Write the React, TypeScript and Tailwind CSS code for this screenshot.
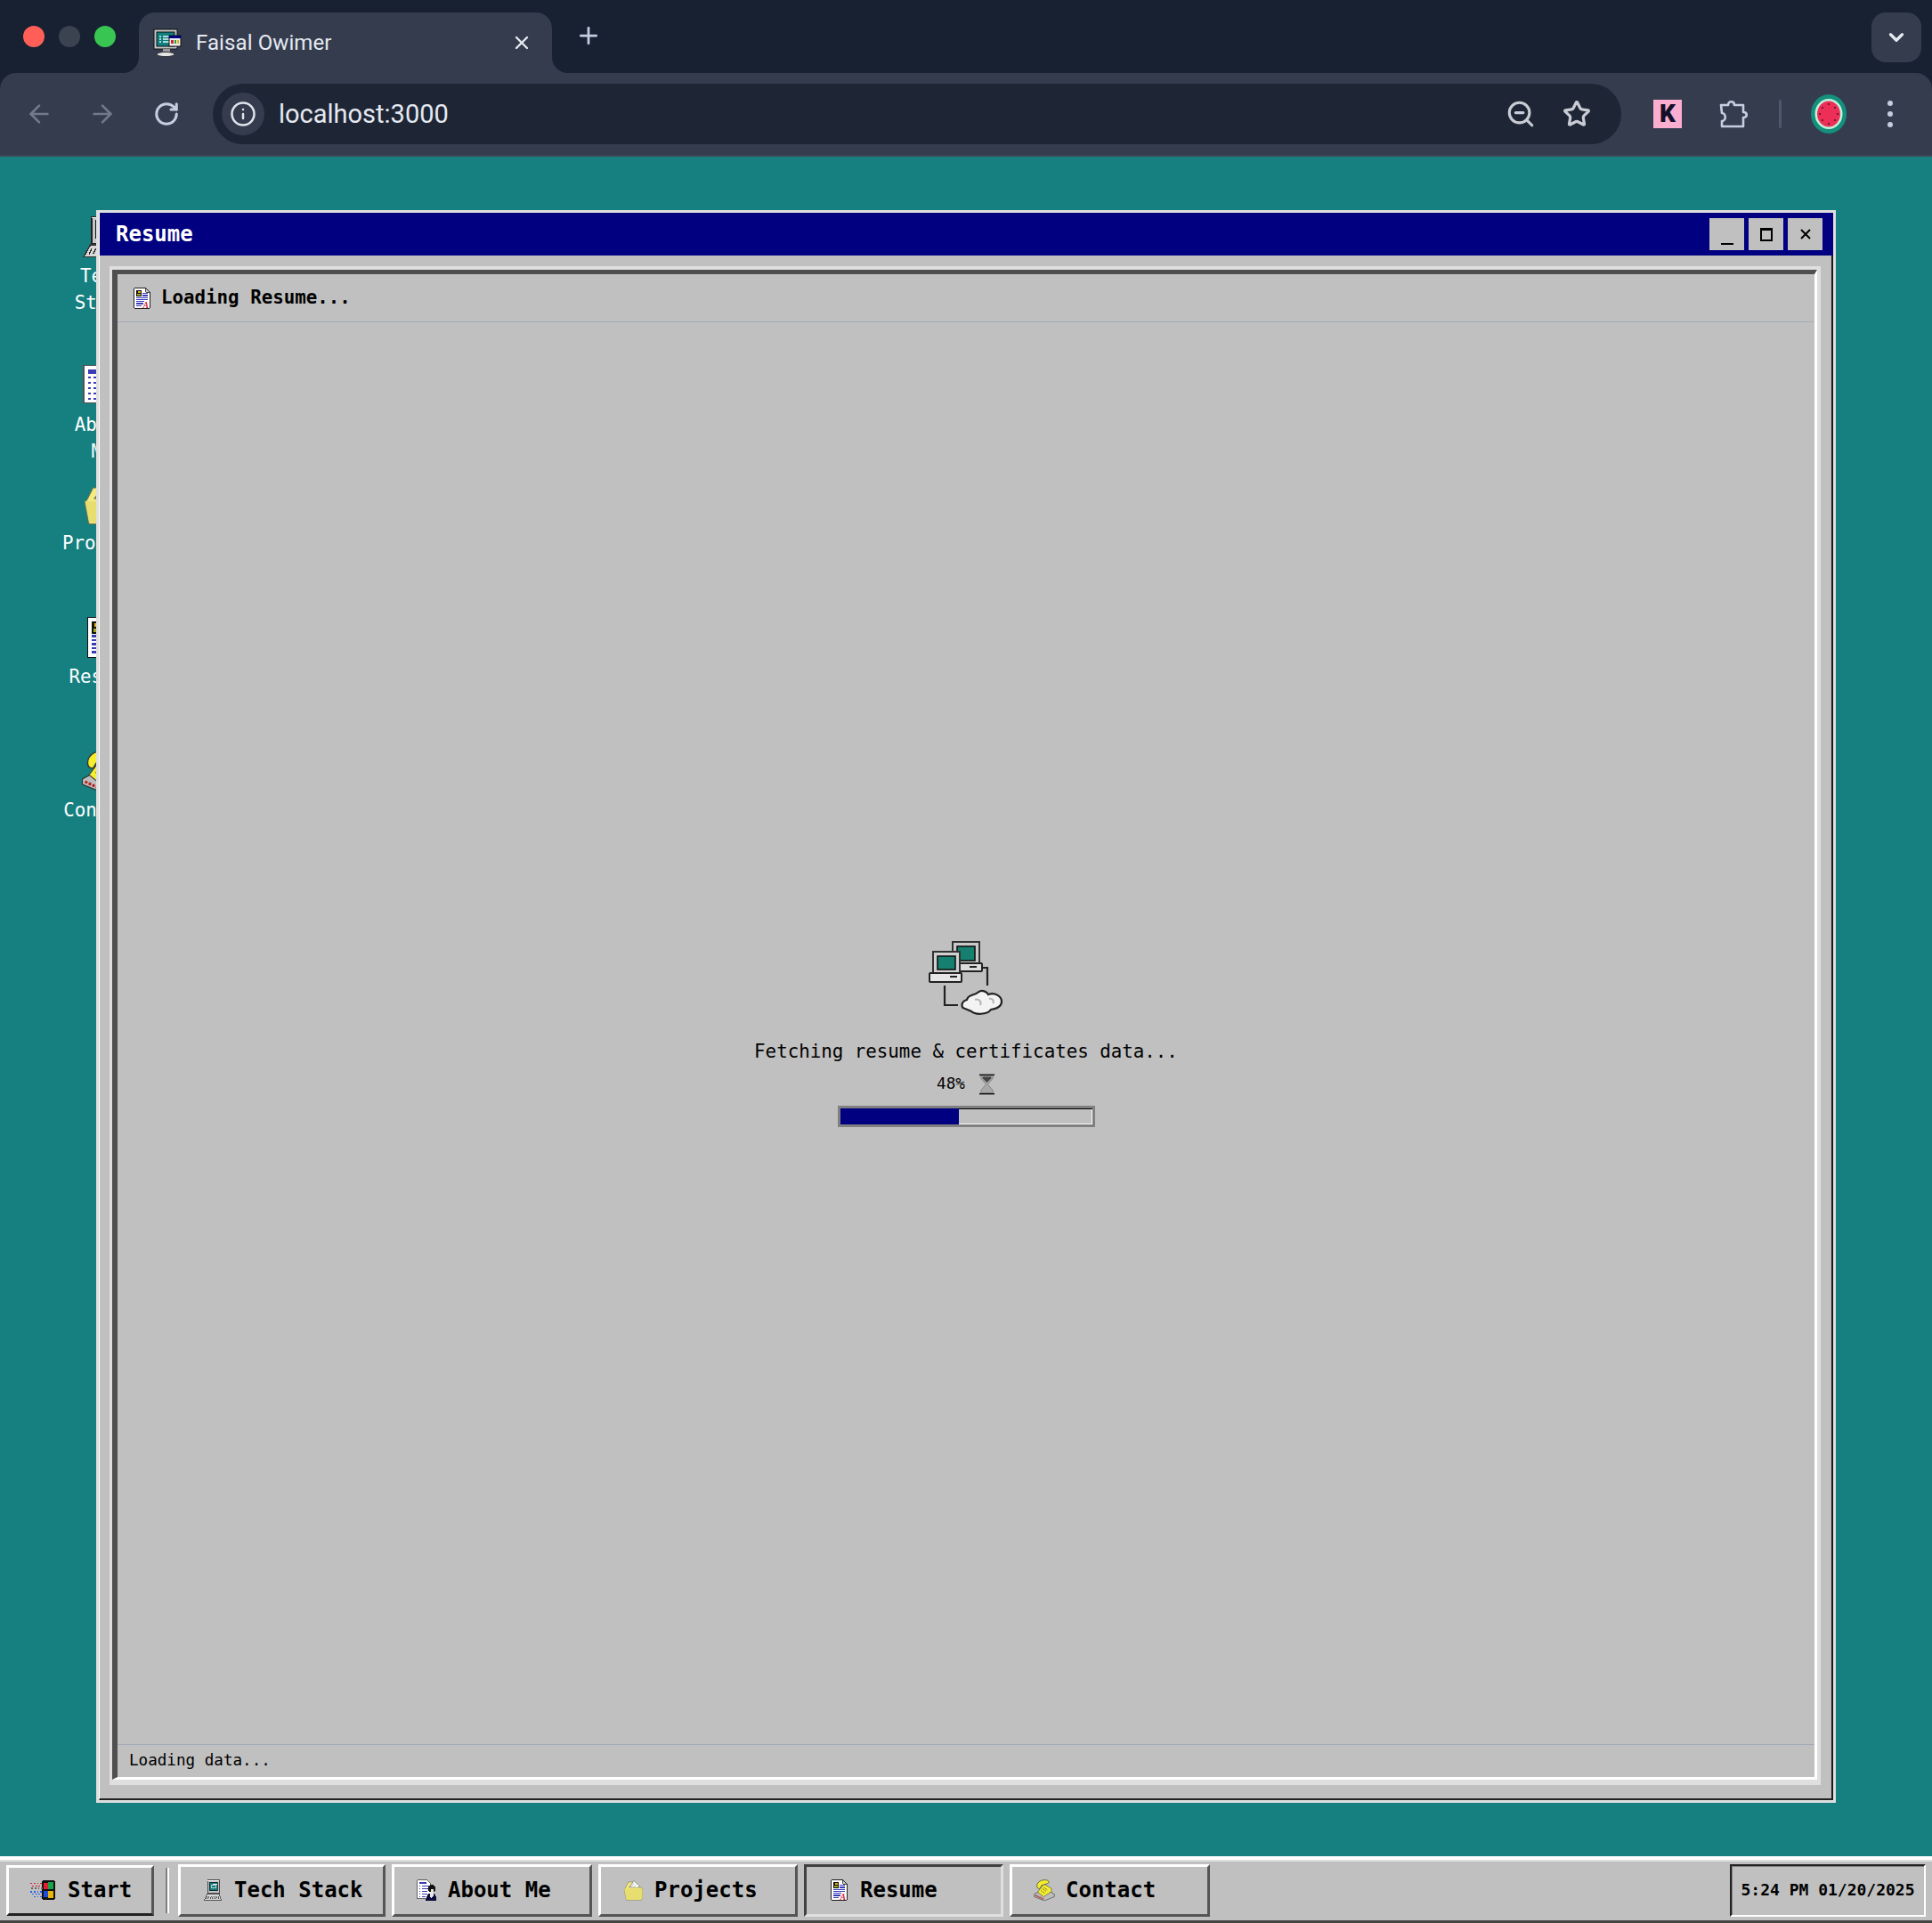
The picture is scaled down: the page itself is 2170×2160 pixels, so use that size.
import React from 'react';
import { ArrowLeft, ArrowRight, RotateCw, Info, ZoomOut, Star, X, Plus, ChevronDown } from 'lucide-react';

type IconProps = { className?: string };

function ComputerIcon({ className }: IconProps) {
  return (
    <svg viewBox="0 0 32 32" className={className} shapeRendering="crispEdges">
      <rect x="8" y="1" width="18" height="20" fill="#c6c6c6" stroke="#222" strokeWidth="1" />
      <rect x="8" y="1" width="17" height="1" fill="#fff" />
      <rect x="11" y="4" width="12" height="13" fill="#0f7f7f" stroke="#111" strokeWidth="1" />
      <rect x="14" y="8" width="7" height="5" fill="#0f7f7f" stroke="#e8e8e8" strokeWidth="1" />
      <rect x="16" y="6" width="6" height="2" fill="#e8e8e8" />
      <rect x="11" y="18" width="3" height="1" fill="#22c55e" />
      <path d="M7 22 H26 L29 31 H2 Z" fill="#d8d8d8" stroke="#333" strokeWidth="1" />
      <path d="M6 29 L8 25 M9 29 L11 25 M12 29 L14 25 M15 29 L17 25 M18 29 L20 25 M21 29 L23 25 M24 29 L25 25" stroke="#222" strokeWidth="1" fill="none" />
    </svg>
  );
}

function FaviconIcon({ className }: IconProps) {
  return (
    <svg viewBox="0 0 32 32" className={className}>
      <rect x="1" y="1" width="26" height="22" fill="#c8c8c8" stroke="#111" />
      <rect x="4" y="4" width="20" height="16" fill="#0f7f7f" stroke="#111" />
      <path d="M7 9h2M11 9h7M7 12h2M11 12h7M7 15h2M11 15h7" stroke="#e8f5f5" strokeWidth="1.4" />
      <rect x="18" y="8" width="13" height="12" fill="#eee" stroke="#111" />
      <rect x="18" y="8" width="13" height="3" fill="#000080" />
      <rect x="20" y="13" width="3" height="4" fill="#dc2626" />
      <rect x="24" y="13" width="2" height="4" fill="#16a34a" />
      <rect x="27" y="13" width="2" height="4" fill="#eab308" />
      <rect x="11" y="23" width="8" height="3" fill="#999" />
      <ellipse cx="14" cy="29" rx="10" ry="2.6" fill="#e5e5e5" stroke="#333" />
    </svg>
  );
}

function ResumeIcon({ className }: IconProps) {
  return (
    <svg viewBox="0 0 32 32" className={className} shapeRendering="crispEdges">
      <path d="M5 1 H22 L28 7 V31 H5 Z" fill="#fff" stroke="#111" strokeWidth="1.2" />
      <path d="M22 1 V7 H28" fill="#ccc" stroke="#111" strokeWidth="1" />
      <rect x="8" y="4" width="8" height="9" fill="#111" />
      <rect x="10" y="5" width="4" height="3" fill="#eab308" />
      <rect x="9" y="9" width="5" height="3" fill="#a3a322" />
      <path d="M17 9h8M17 12h8M8 15h17M8 18h17M8 21h12M8 24h10M8 27h8" stroke="#3b3bb8" strokeWidth="1.6" />
      <text x="18" y="30" fontSize="13" fontStyle="italic" fontWeight="700" fill="#d6263a" fontFamily="'Liberation Serif', serif">A</text>
    </svg>
  );
}

function AboutIcon({ className }: IconProps) {
  return (
    <svg viewBox="0 0 32 32" className={className} shapeRendering="crispEdges">
      <path d="M2 1 H17 L22 6 V29 H2 Z" fill="#fff" stroke="#555" strokeWidth="1.2" />
      <rect x="5" y="4" width="11" height="3" fill="#3b3bb8" />
      <path d="M5 10h2M9 10h11M5 14h2M9 14h11M5 18h2M9 18h8M5 22h2M9 22h8M5 26h2M9 26h6" stroke="#3b3bb8" strokeWidth="1.6" />
      <circle cx="24" cy="14" r="6" fill="#111" />
      <path d="M15 32 C15 24 19 20 24 20 C29 20 31 25 31 32 Z" fill="#0b0b3c" />
      <path d="M23 14 L27 14 L26 20 L27 24 L23 29 L21 24 Z" fill="#e6e6e6" />
    </svg>
  );
}

function FolderIcon({ className }: IconProps) {
  return (
    <svg viewBox="0 0 32 32" className={className}>
      <path d="M10 13 L17 2 L25 9 L25 14 Z" fill="#fff" stroke="#666" strokeWidth="0.8" />
      <path d="M13 12 L18 5 M16 13 L21 7" stroke="#9ca3af" strokeWidth="0.9" />
      <path d="M5 12 L9 4 H16 L10 12 H27 L30 14 V28 L28 31 H6 L3 15 Z" fill="#f3ea83" stroke="#75704a" strokeWidth="0.7" />
      <path d="M3 14 H30 V28 L28 30 H6 Z" fill="#e8dd6f" />
    </svg>
  );
}

function PhoneIcon({ className }: IconProps) {
  return (
    <svg viewBox="0 0 32 32" className={className}>
      <path d="M1 22 L16 14 L31 22 V26 L16 32 L1 26 Z" fill="#bdbdbd" stroke="#333" strokeWidth="0.8" />
      <path d="M3 24 L15 29.5" stroke="#b91c1c" strokeWidth="2" strokeDasharray="2 1" />
      <path d="M6 19 L15 7 L26 13 L27 18 L15 26 Z" fill="#f4ee2e" stroke="#444" strokeWidth="0.8" />
      <path d="M5 10 C5 3 13 0 19 1 C23 2 24 5 21 6 L12 9 L9 14 C6 14 5 12 5 10 Z" fill="#f4ee2e" stroke="#333" strokeWidth="0.9" />
      <path d="M13 14 L19 18 M15 12 L21 16 M11 17 L17 21" stroke="#222" strokeWidth="1" strokeDasharray="1.5 1" />
    </svg>
  );
}

function StartIcon({ className }: IconProps) {
  return (
    <svg viewBox="0 0 30 24" className={className} shapeRendering="crispEdges">
      <rect x="14" y="0" width="16" height="24" rx="2" fill="#111" />
      <rect x="16" y="3" width="5" height="8" fill="#e11d2e" />
      <rect x="22" y="2" width="6" height="9" fill="#16a34a" />
      <rect x="16" y="13" width="5" height="8" fill="#1d4ed8" />
      <rect x="22" y="13" width="6" height="9" fill="#eab308" />
      <path d="M0 4h2M4 4h2M8 4h2M12 4h2M2 7h2M6 7h2M10 7h2" stroke="#e11d2e" strokeWidth="1.6" />
      <path d="M1 10h2M5 10h2M9 10h2M13 10h2" stroke="#666" strokeWidth="1.6" />
      <path d="M0 14h2M4 14h2M8 14h2M12 14h2M2 17h2M6 17h2M10 17h2M4 20h2M8 20h2M12 20h2" stroke="#2563eb" strokeWidth="1.6" />
    </svg>
  );
}

function NetworkIcon({ className }: IconProps) {
  return (
    <svg viewBox="0 0 84 84" className={className}>
      <path d="M57 30 H66 V50" fill="none" stroke="#222" strokeWidth="2.2" />
      <path d="M18 50 V72 H33" fill="none" stroke="#222" strokeWidth="2.2" />
      <rect x="27" y="1" width="30" height="26" fill="#c9c9c9" stroke="#333" strokeWidth="2" />
      <rect x="32" y="6" width="20" height="16" fill="#15806f" stroke="#111" strokeWidth="1.6" />
      <rect x="24" y="25" width="36" height="9" rx="1" fill="#dcdcdc" stroke="#222" strokeWidth="2" />
      <rect x="46" y="28" width="8" height="2" fill="#222" />
      <rect x="5" y="12" width="30" height="25" fill="#d0d0d0" stroke="#333" strokeWidth="2" />
      <rect x="10" y="17" width="20" height="15" fill="#15806f" stroke="#111" strokeWidth="1.6" />
      <rect x="1" y="36" width="36" height="10" rx="1" fill="#e6e6e6" stroke="#222" strokeWidth="2" />
      <rect x="24" y="39" width="8" height="2" fill="#222" />
      <path d="M41 76 C36 75 36 68 43 66 C44 60 52 61 55 58 C60 53 66 58 67 60 C74 57 82 62 82 68 C82 74 76 76 70 77 C66 83 52 83 48 79 Z" fill="#f3f3f3" stroke="#222" strokeWidth="2.2" />
      <path d="M52 66 C56 64 60 68 58 72 M68 65 C72 64 74 68 72 70" fill="none" stroke="#b5b5b5" strokeWidth="2" />
    </svg>
  );
}

function HourglassIcon({ className }: IconProps) {
  return (
    <svg viewBox="0 0 20 24" className={className}>
      <rect x="1" y="0" width="18" height="1.6" fill="#111" />
      <rect x="1" y="22.4" width="18" height="1.6" fill="#111" />
      <path d="M3 2 H17 V5 L11 12 L17 19 V22 H3 V19 L9 12 L3 5 Z" fill="#a8a8a8" stroke="#777" strokeWidth="0.8" />
      <path d="M5 3 H15 V5 L10 10 L5 5 Z" fill="#444" />
    </svg>
  );
}

function PuzzleIcon({ className }: IconProps) {
  return (
    <svg viewBox="0 0 32 32" className={className} fill="none" stroke="#c5cde0" strokeWidth="2.6" strokeLinejoin="round">
      <path d="M2 6 H10 C10 1 17 1 17 6 H27 V14 C32 14 32 20 27 20 V30 H3 V24 C8 24 8 15 3 15 Z" />
    </svg>
  );
}

function Avatar() {
  return (
    <svg viewBox="0 0 40 44" className="w-[40px] h-[44px]">
      <ellipse cx="20" cy="22" rx="20" ry="22" fill="#14907d" />
      <ellipse cx="20" cy="22" rx="15.5" ry="17" fill="#bff3dc" />
      <ellipse cx="20" cy="22" rx="13" ry="14.5" fill="#ed2f58" />
      <g fill="#3b1020">
        <circle cx="20" cy="11" r="0.9" /><circle cx="20" cy="33" r="0.9" /><circle cx="10" cy="22" r="0.9" /><circle cx="30" cy="22" r="0.9" />
        <circle cx="13" cy="15" r="0.9" /><circle cx="27" cy="15" r="0.9" /><circle cx="13" cy="29" r="0.9" /><circle cx="27" cy="29" r="0.9" />
      </g>
    </svg>
  );
}

const desktopItems = [
  { top: 'top-[66px]', label: 'Tech Stack', Icon: ComputerIcon },
  { top: 'top-[233px]', label: 'About Me', Icon: AboutIcon },
  { top: 'top-[366px]', label: 'Projects', Icon: FolderIcon },
  { top: 'top-[516px]', label: 'Resume', Icon: ResumeIcon },
  { top: 'top-[666px]', label: 'Contact', Icon: PhoneIcon },
];

const taskItems = [
  { label: 'Tech Stack', w: 'w-[233px]', Icon: ComputerIcon, active: false },
  { label: 'About Me', w: 'w-[225px]', Icon: AboutIcon, active: false },
  { label: 'Projects', w: 'w-[224px]', Icon: FolderIcon, active: false },
  { label: 'Resume', w: 'w-[224px]', Icon: ResumeIcon, active: true },
  { label: 'Contact', w: 'w-[225px]', Icon: PhoneIcon, active: false },
];

function BrowserChrome() {
  return (
    <div className="shrink-0 bg-[#172132] font-['Roboto',sans-serif]">
      <div className="h-[82px] flex items-start">
        <div className="flex items-center gap-[16px] ml-[26px] mt-[29px]">
          <div className="w-[24px] h-[24px] rounded-full bg-[#ff5f57]" />
          <div className="w-[24px] h-[24px] rounded-full bg-[#3b4350]" />
          <div className="w-[24px] h-[24px] rounded-full bg-[#39c552]" />
        </div>
        <div className="relative ml-[26px] mt-[14px] w-[464px] h-[68px] bg-[#343c4e] rounded-t-[18px] flex items-center pl-[16px] pr-[22px]">
          <svg viewBox="0 0 18 18" className="absolute bottom-0 -left-[18px] w-[18px] h-[18px]"><path d="M18 0 V18 H0 A18 18 0 0 0 18 0 Z" fill="#343c4e" /></svg>
          <svg viewBox="0 0 18 18" className="absolute bottom-0 -right-[18px] w-[18px] h-[18px]"><path d="M0 0 V18 H18 A18 18 0 0 1 0 0 Z" fill="#343c4e" /></svg>
          <FaviconIcon className="w-[32px] h-[32px] shrink-0" />
          <span className="ml-[16px] text-[24px] leading-none text-[#e5e9f0] tracking-[0.1px]">Faisal Owimer</span>
          <X className="ml-auto w-[24px] h-[24px] text-[#e5e9f0]" strokeWidth={2.4} />
        </div>
        <Plus className="ml-[26px] mt-[25px] w-[30px] h-[30px] text-[#c5cde0]" strokeWidth={2.2} />
        <div className="ml-auto mr-[12px] mt-[14px] w-[56px] h-[56px] rounded-[16px] bg-[#343c4e] flex items-center justify-center">
          <ChevronDown className="w-[26px] h-[26px] text-[#e5e9f0]" strokeWidth={3} />
        </div>
      </div>
      <div className="h-[94px] bg-[#343c4e] rounded-t-[18px] border-b-2 border-[#3f4859] flex items-center">
        <ArrowLeft className="ml-[28px] w-[32px] h-[32px] text-[#727a8a]" strokeWidth={2} />
        <ArrowRight className="ml-[39px] w-[32px] h-[32px] text-[#727a8a]" strokeWidth={2} />
        <RotateCw className="ml-[41px] w-[30px] h-[30px] text-[#c5cde0]" strokeWidth={2.4} />
        <div className="ml-[37px] w-[1582px] h-[68px] rounded-full bg-[#1e2636] flex items-center pl-[10px] pr-[34px]">
          <div className="w-[48px] h-[48px] rounded-full bg-[#343c4e] flex items-center justify-center">
            <Info className="w-[30px] h-[30px] text-[#e0e4ec]" strokeWidth={2} />
          </div>
          <span className="ml-[16px] text-[29px] leading-none text-[#e5e9f0]">localhost:3000</span>
          <ZoomOut className="ml-auto w-[34px] h-[34px] text-[#c9ccd4]" strokeWidth={2.2} />
          <Star className="ml-[30px] w-[32px] h-[32px] text-[#c9ccd4]" strokeWidth={2.4} />
        </div>
        <div className="ml-[36px] w-[32px] h-[32px] bg-[#fbaecf] flex items-center justify-center text-[28px] font-black leading-none text-[#14102a]">K</div>
        <PuzzleIcon className="ml-[42px] w-[32px] h-[32px]" />
        <div className="ml-[35px] w-[3px] h-[32px] rounded-full bg-[#4f586a]" />
        <div className="ml-[33px]"><Avatar /></div>
        <div className="ml-[46px] flex flex-col gap-[6px]">
          <div className="w-[6px] h-[6px] rounded-full bg-[#c5cde0]" />
          <div className="w-[6px] h-[6px] rounded-full bg-[#c5cde0]" />
          <div className="w-[6px] h-[6px] rounded-full bg-[#c5cde0]" />
        </div>
      </div>
    </div>
  );
}

function WindowFrame() {
  return (
    <div className="absolute left-[108px] top-[60px] w-[1954px] h-[1789px] border-[3px] border-[#dfdfdf] bg-[#c0c0c0] flex flex-col">
      <div className="flex-1 min-h-0 flex flex-col border-l border-l-white border-r-2 border-r-[#1a1a1a] border-b-2 border-b-[#222222]">
        <div className="h-[48px] shrink-0 -mr-[2px] bg-[#000080] flex items-center pl-[18px] pr-[12px]">
          <span className="text-[24px] leading-none font-bold text-white">Resume</span>
          <div className="ml-auto flex gap-[5px]">
            <div className="w-[39px] h-[36px] bg-[#c0c0c0] flex items-end justify-center pb-[6px]">
              <div className="w-[14px] h-[2px] bg-black" />
            </div>
            <div className="w-[39px] h-[36px] bg-[#c0c0c0] flex items-center justify-center">
              <div className="w-[14px] h-[15px] border-2 border-black border-t-[3px]" />
            </div>
            <div className="w-[39px] h-[36px] bg-[#c0c0c0] flex items-center justify-center">
              <svg viewBox="0 0 12 12" className="w-[12px] h-[12px]"><path d="M1 1 L11 11 M11 1 L1 11" stroke="#000" strokeWidth="2" /></svg>
            </div>
          </div>
        </div>
        <div className="flex-1 min-h-0 pl-[11px] pr-[12px] pt-[12px] pb-[15px] flex">
          <div className="flex-1 min-w-0 border-[#dfdfdf] border-t-[4px] border-l-[3px] border-r-[4px] border-b-[6px] flex">
            <div className="flex-1 min-w-0 flex flex-col border-t-[5px] border-l-[6px] border-r-[3px] border-b-[3px] border-t-[#4f4f4f] border-l-[#4f4f4f] border-r-white border-b-white">
              <div className="h-[54px] shrink-0 border-b border-[#a3abb9] flex items-center pl-[15px]">
                <ResumeIcon className="w-[24px] h-[24px]" />
                <span className="ml-[10px] text-[20.8px] leading-none font-bold text-black">Loading Resume...</span>
              </div>
              <div className="flex-1 min-h-0 flex flex-col items-center justify-center pt-[2px]">
                <NetworkIcon className="w-[84px] h-[84px]" />
                <div className="mt-[25px] text-[20.8px] leading-[30px] text-black">Fetching resume &amp; certificates data...</div>
                <div className="mt-[10px] flex items-center h-[24px]">
                  <span className="text-[17.6px] leading-none text-black">48%</span>
                  <HourglassIcon className="ml-[15px] w-[19px] h-[24px]" />
                </div>
                <div className="mt-[12px] w-[289px] h-[24px] border-[3px] border-[#808080] flex bg-[#c0c0c0] shadow-[inset_0_1px_0_#000,inset_-1px_-1px_0_#fff]">
                  <div className="w-[133px] bg-[#000080]" />
                </div>
              </div>
              <div className="h-[37px] shrink-0 border-t border-[#a3abb9] flex items-center pl-[13px]">
                <span className="text-[17.6px] leading-none text-black">Loading data...</span>
              </div>
            </div>
          </div>
        </div>
      </div>
    </div>
  );
}

function Taskbar() {
  return (
    <div className="h-[75px] shrink-0 bg-[#c0c0c0] border-t-[4px] border-t-white border-b-[3px] border-b-[#444444] shadow-[inset_0_2px_0_#dfdfdf] flex items-center pl-[7px] pr-[7px] text-black">
      <div className="w-[166px] h-[57px] bg-[#c0c0c0] border-[3px] border-t-white border-l-white border-r-[#555555] border-b-[#222222] flex items-center pl-[23px]">
        <StartIcon className="w-[30px] h-[22px]" />
        <span className="ml-[13px] text-[24px] leading-none font-bold">Start</span>
      </div>
      <div className="ml-[13px] w-[4px] h-[51px] border-l-2 border-l-[#808080] border-r-2 border-r-white" />
      <div className="ml-[10px] flex gap-[7px]">
        {taskItems.map(({ label, w, Icon, active }) => (
          <div
            key={label}
            className={
              active
                ? `${w} h-[59px] bg-[#c0c0c0] border-[3px] border-t-[#404040] border-l-[#404040] border-r-[#dfdfdf] border-b-[#dfdfdf] flex items-center pl-[24px]`
                : `${w} h-[59px] bg-[#c0c0c0] border-[3px] border-t-white border-l-white border-r-[#555555] border-b-[#555555] flex items-center pl-[24px]`
            }
          >
            <Icon className="w-[24px] h-[24px] shrink-0" />
            <span className="ml-[12px] text-[24px] leading-none font-bold">{label}</span>
          </div>
        ))}
      </div>
      <div className="ml-auto w-[220px] h-[59px] border-2 border-t-[#222222] border-l-[#222222] border-r-white border-b-white shadow-[inset_1px_1px_0_#808080] flex items-center justify-center">
        <span className="text-[18px] leading-none font-bold whitespace-nowrap">5:24 PM 01/20/2025</span>
      </div>
    </div>
  );
}

export default function App() {
  return (
    <div className="w-[2170px] h-[2160px] overflow-hidden flex flex-col font-['DejaVu_Sans_Mono',monospace]">
      <BrowserChrome />
      <div className="relative flex-1 min-h-0 bg-[#15807f]">
        {desktopItems.map(({ top, label, Icon }) => (
          <div key={label} className={`absolute left-[55px] w-[120px] ${top} flex flex-col items-center`}>
            <Icon className="w-[48px] h-[48px]" />
            <div className="mt-[5px] w-[90px] text-center text-[20.8px] leading-[30px] text-white">{label}</div>
          </div>
        ))}
        <WindowFrame />
      </div>
      <Taskbar />
    </div>
  );
}
